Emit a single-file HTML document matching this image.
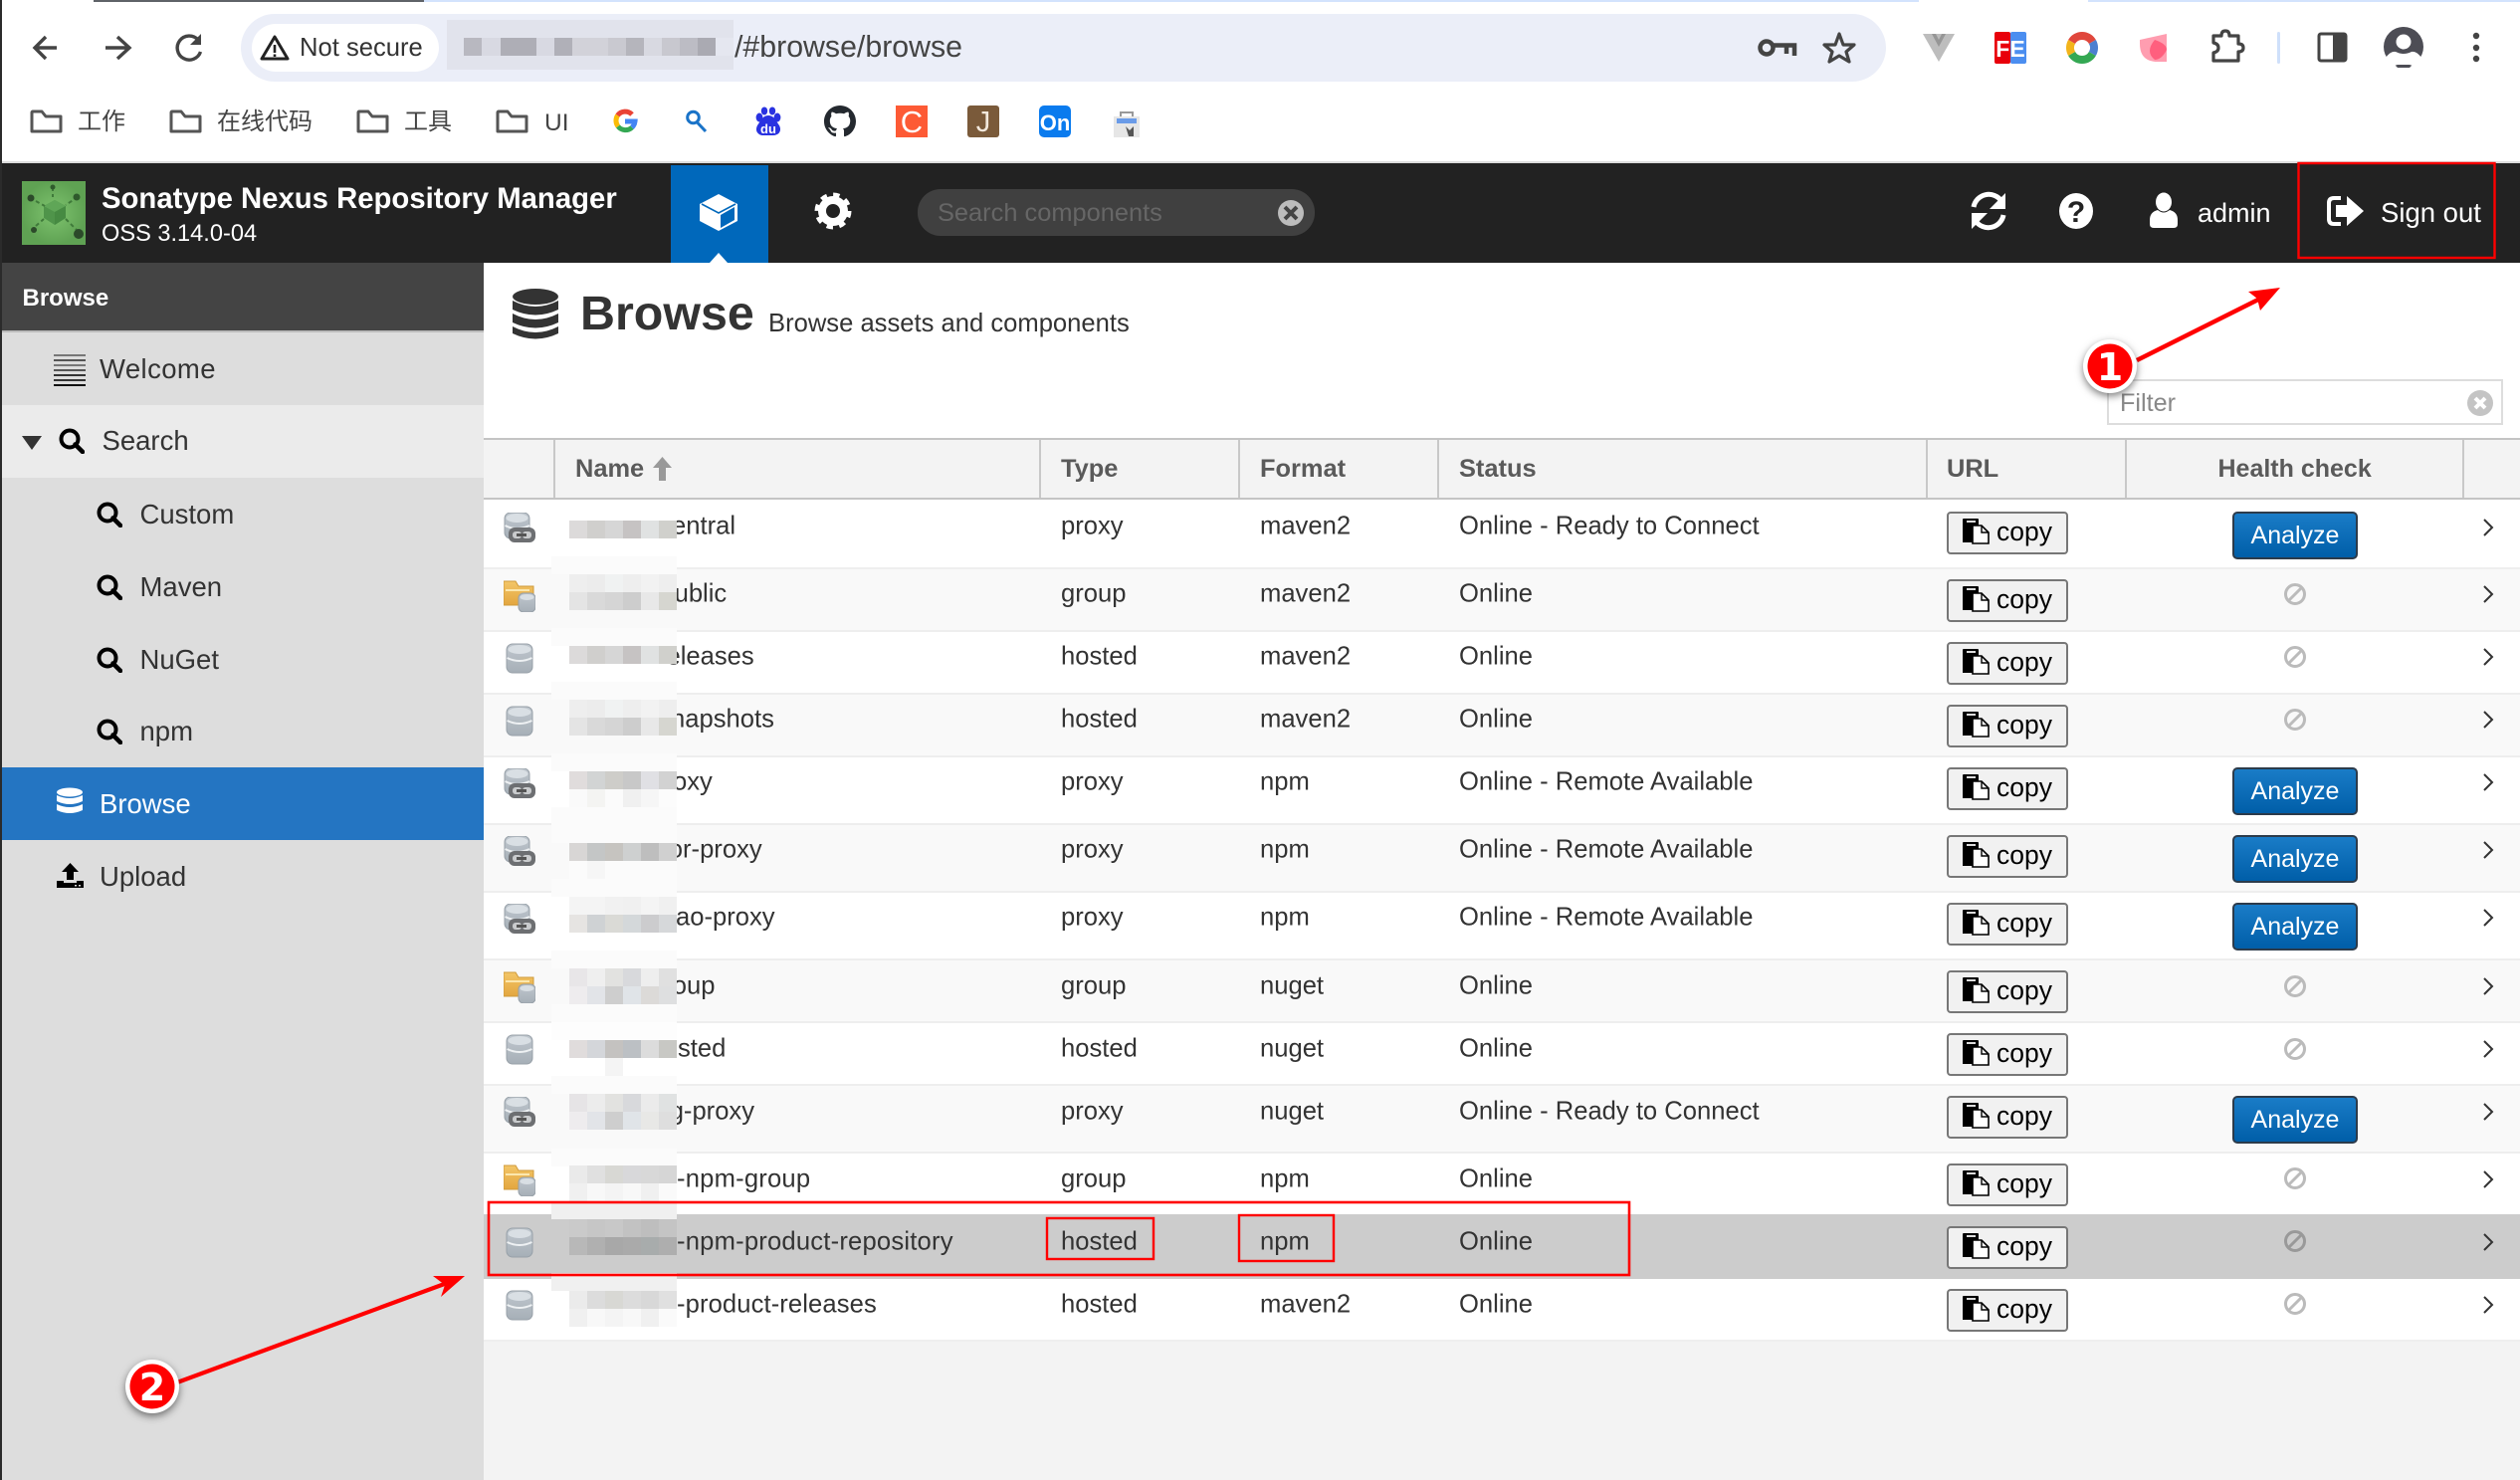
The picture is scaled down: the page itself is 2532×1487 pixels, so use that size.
<!DOCTYPE html>
<html><head><meta charset="utf-8"><title>Browse</title>
<style>
html,body{margin:0;padding:0;width:2532px;height:1487px;overflow:hidden;background:#fff}
body{position:relative;font-family:"Liberation Sans","Noto Sans CJK SC",sans-serif;color:#333}
div,span,i{position:absolute}
.t{line-height:1;white-space:nowrap}
.n{left:0;font-size:27.5px;line-height:1;white-space:nowrap}
.bg{left:486px;width:2046px}
.ln{left:486px;width:2046px;height:2px;background:#eee}
.alt{background:#f9f9f9}
.r{left:0;top:0;font-size:25.6px;line-height:1;white-space:nowrap;transform:translateY(1.5px)}
.r span{white-space:nowrap}
.hd{font-size:25.4px;font-weight:bold;color:#5a5a5a;top:459px;line-height:1;white-space:nowrap}
.vs{top:442px;width:2px;height:58px;background:#c8c8c8}
.c{left:1956px;width:118px;height:39px;border:2px solid #777;border-radius:4px;background:#f1f1f1;color:#000;font-size:26.5px;line-height:1}
.c b{position:absolute;font-weight:normal;left:48px;top:5px}
.c svg{position:absolute;left:14px;top:5px}
.a{left:2243px;width:122px;height:44px;border:2px solid #2c3b4b;border-radius:5px;background:linear-gradient(#1a7cc7,#005ea8);color:#fff;font-size:25px;line-height:1;text-align:center}
.a b{position:absolute;font-weight:normal;left:0;right:0;top:10px}
.s{left:572px;width:108px;height:18px}
.h{left:554px;width:126px;height:18px;background:#fbfbfb}
</style></head><body>
<svg width="0" height="0" style="position:absolute"><defs>
<linearGradient id="g1" x1="0" y1="0" x2="0" y2="1"><stop offset="0" stop-color="#c0c7ce"/><stop offset="1" stop-color="#a6afb7"/></linearGradient>
<linearGradient id="g2" x1="0" y1="0" x2="0" y2="1"><stop offset="0" stop-color="#f3c668"/><stop offset="1" stop-color="#e3a63f"/></linearGradient>
<radialGradient id="g3"><stop offset="0" stop-color="#7fc46f"/><stop offset="1" stop-color="#5fa253"/></radialGradient>
<symbol id="db" viewBox="0 0 28 31"><rect x="1" y="1" width="26" height="29" rx="6" fill="url(#g1)" stroke="#98a1a9"/><ellipse cx="14" cy="6.5" rx="11.5" ry="4.5" fill="#d9dfe4"/><path d="M1.5 15Q14 21 26.5 15" stroke="#eef1f3" stroke-width="2" fill="none"/></symbol>
<symbol id="px" viewBox="0 0 32 31"><rect x="1" y="0" width="25" height="26" rx="6" fill="url(#g1)" stroke="#98a1a9"/><ellipse cx="13.5" cy="5.5" rx="11" ry="4.5" fill="#d9dfe4"/><path d="M1.5 13Q13 19 26 13" stroke="#eef1f3" stroke-width="2" fill="none"/><rect x="5" y="15" width="27" height="15" rx="6" fill="#6d6f72"/><rect x="9" y="19" width="9" height="7" rx="3" fill="#c9cbcd"/><rect x="19" y="19" width="9" height="7" rx="3" fill="#c9cbcd"/><rect x="13" y="21" width="10" height="3" fill="#555"/></symbol>
<symbol id="fo" viewBox="0 0 32 32"><path d="M0 1H12L15 6H30V25H0Z" fill="url(#g2)" stroke="#cf9a3b"/><path d="M2 9H26V11H2Z" fill="#fbe7ae"/><rect x="15" y="13" width="17" height="19" rx="5" fill="url(#g1)" stroke="#98a1a9"/><ellipse cx="23.5" cy="17" rx="7" ry="3" fill="#d9dfe4"/></symbol>
<symbol id="cp" viewBox="0 0 27 26"><path d="M0 1a1 1 0 0 1 1-1H15a1 1 0 0 1 1 1V24H0Z" fill="#000"/><rect x="4" y="2" width="9" height="2" fill="#ddd"/><path d="M10 7H19L26 14V25H10Z" fill="#fff" stroke="#000" stroke-width="1.6"/><path d="M19 7V14H26" fill="none" stroke="#000" stroke-width="1.4"/></symbol>
<symbol id="mg" viewBox="0 0 26 26"><circle cx="11" cy="11" r="8.5" fill="none" stroke="#000" stroke-width="4"/><path d="M16.5 16.5L24 24" stroke="#000" stroke-width="4.5" stroke-linecap="round"/></symbol>
<symbol id="bf" viewBox="0 0 33 24"><path d="M2 22V3a1 1 0 0 1 1-1h9l4 5h15v15z" fill="none" stroke="#555" stroke-width="3" stroke-linejoin="round"/></symbol>
<symbol id="ban" viewBox="0 0 24 24"><circle cx="12" cy="12" r="9.5" fill="none" stroke="#bbb" stroke-width="3"/><path d="M5.5 18.5L18.5 5.5" stroke="#bbb" stroke-width="3"/></symbol>
<symbol id="ban2" viewBox="0 0 24 24"><circle cx="12" cy="12" r="9.5" fill="none" stroke="#999" stroke-width="3"/><path d="M5.5 18.5L18.5 5.5" stroke="#999" stroke-width="3"/></symbol>
<symbol id="ch" viewBox="0 0 12 18"><path d="M2 1L10 9L2 17" fill="none" stroke="#333" stroke-width="2"/></symbol>
</defs></svg>

<!-- browser chrome -->
<div style="left:94px;top:0;width:332px;height:2px;background:#5f6368"></div>
<div style="left:426px;top:0;width:1502px;height:2px;background:#d3e3fd"></div>
<div style="left:2098px;top:0;width:434px;height:2px;background:#d3e3fd"></div>
<div style="left:242px;top:14px;width:1653px;height:68px;border-radius:34px;background:#ebeef8"></div>
<div style="left:253px;top:24px;width:188px;height:48px;border-radius:24px;background:#fff"></div>
<div class="t" style="left:301px;top:36.3px;font-size:25.6px;color:#333">Not secure</div>
<div style="left:449px;top:20px;width:288px;height:50px;background:#e1e3ec"></div>
<div style="left:449px;top:38px;width:288px;height:18px;background:linear-gradient(90deg,#e1e3ec 17px,#b8b8c0 0 35px,#d8d9e2 0 54px,#aeaeb6 0 90px,#d8d9e2 0 108px,#b0b0b8 0 126px,#d2d2d9 0 162px,#c9c9d0 0 180px,#b5b5bc 0 198px,#d8d9e1 0 216px,#c8c8cf 0 234px,#bcbcc4 0 252px,#aaaab2 0 270px,#e5e7f0 0)"></div>
<div class="t" style="left:738px;top:33px;font-size:30.3px;color:#444">/#browse/browse</div>
<div class="t" style="left:78px;top:111px;font-size:24px;color:#444">工作</div>
<div class="t" style="left:218px;top:111px;font-size:24px;color:#444">在线代码</div>
<div class="t" style="left:406px;top:111px;font-size:24px;color:#444">工具</div>
<div class="t" style="left:547px;top:111.5px;font-size:24.5px;color:#444">UI</div>
<div style="left:0;top:162px;width:2532px;height:2px;background:#ddd"></div>

<!-- app header -->
<div style="left:0;top:164px;width:2532px;height:100px;background:#222"></div>
<div style="left:674px;top:166px;width:98px;height:98px;background:#0068bb"></div>
<div style="left:922px;top:190px;width:399px;height:47px;border-radius:23px;background:#404040"></div>
<div class="t" style="left:942px;top:202px;font-size:25.4px;color:#666">Search components</div>
<div class="t" style="left:102px;top:184.8px;font-size:29.3px;font-weight:bold;color:#fff">Sonatype Nexus Repository Manager</div>
<div class="t" style="left:102px;top:224.2px;font-size:23.6px;color:#fff">OSS 3.14.0-04</div>
<div class="t" style="left:2208px;top:200.5px;font-size:27px;color:#fff">admin</div>
<div class="t" style="left:2392px;top:200px;font-size:27.5px;color:#fff">Sign out</div>

<!-- sidebar -->
<div style="left:2px;top:264px;width:484px;height:68px;background:#444"></div>
<div style="left:2px;top:332px;width:484px;height:1155px;background:#ddd;border-top:2px solid #bbb;box-sizing:border-box"></div>
<div style="left:2px;top:407px;width:484px;height:73px;background:#ebebeb"></div>
<div style="left:2px;top:771px;width:484px;height:73px;background:#2475c2"></div>
<div class="t" style="left:22.5px;top:288px;font-size:24px;font-weight:bold;color:#fff">Browse</div>
<div class="n" style="left:100px;top:356.7px;letter-spacing:.4px">Welcome</div>
<div class="n" style="left:102.5px;top:428.7px">Search</div>
<div class="n" style="left:140.5px;top:503.2px">Custom</div>
<div class="n" style="left:140.5px;top:576.2px">Maven</div>
<div class="n" style="left:140.5px;top:649px">NuGet</div>
<div class="n" style="left:140.5px;top:721px">npm</div>
<div class="n" style="left:100px;top:794px;color:#fff">Browse</div>
<div class="n" style="left:100px;top:866.5px">Upload</div>

<!-- main -->
<div style="left:486px;top:1346px;width:2046px;height:141px;background:#f3f3f3"></div>
<div class="t" style="left:583px;top:291px;font-size:48.4px;font-weight:bold;color:#333">Browse</div>
<div class="t" style="left:772px;top:312.5px;font-size:25.6px;color:#333">Browse assets and components</div>
<div style="left:2117px;top:381px;width:394px;height:42px;border:2px solid #ddd;background:#fff"></div>
<div class="t" style="left:2130px;top:392.8px;font-size:25.2px;color:#888">Filter</div>

<!-- table header -->
<div style="left:486px;top:440px;width:2046px;height:62px;background:#f3f3f3;border-top:2px solid #c4c4c4;border-bottom:2px solid #c4c4c4;box-sizing:border-box"></div>
<div class="vs" style="left:556px"></div><div class="vs" style="left:1044px"></div><div class="vs" style="left:1244px"></div><div class="vs" style="left:1444px"></div><div class="vs" style="left:1935px"></div><div class="vs" style="left:2135px"></div><div class="vs" style="left:2474px"></div>
<div class="hd" style="left:578px">Name</div>
<div class="hd" style="left:1066px">Type</div>
<div class="hd" style="left:1266px">Format</div>
<div class="hd" style="left:1466px">Status</div>
<div class="hd" style="left:1956px">URL</div>
<div class="hd" style="left:2228.5px;font-size:25px">Health check</div>

<!-- row backgrounds -->
<div class="bg alt" style="top:572px;height:61px"></div>
<div class="bg alt" style="top:698px;height:61px"></div>
<div class="bg alt" style="top:829px;height:66px"></div>
<div class="bg alt" style="top:965px;height:61px"></div>
<div class="bg alt" style="top:1091px;height:66px"></div>
<div class="bg" style="top:1220px;height:65px;background:#ccc"></div>
<div class="ln" style="top:570px"></div><div class="ln" style="top:633px"></div><div class="ln" style="top:696px"></div><div class="ln" style="top:759px"></div><div class="ln" style="top:827px"></div><div class="ln" style="top:895px"></div><div class="ln" style="top:963px"></div><div class="ln" style="top:1026px"></div><div class="ln" style="top:1089px"></div><div class="ln" style="top:1157px"></div><div class="ln" style="top:1346px"></div>

<!-- rows text -->
<div class="r" style="top:515.4px"><span style="left:675px">entral</span><span style="left:1066px">proxy</span><span style="left:1266px">maven2</span><span style="left:1466px">Online - Ready to Connect</span></div>
<div class="r" style="top:582.6px"><span style="left:677.6px">ublic</span><span style="left:1066px">group</span><span style="left:1266px">maven2</span><span style="left:1466px">Online</span></div>
<div class="r" style="top:646px"><span style="left:669.5px">eleases</span><span style="left:1066px">hosted</span><span style="left:1266px">maven2</span><span style="left:1466px">Online</span></div>
<div class="r" style="top:709px"><span style="left:674px">napshots</span><span style="left:1066px">hosted</span><span style="left:1266px">maven2</span><span style="left:1466px">Online</span></div>
<div class="r" style="top:772px"><span style="left:676px">oxy</span><span style="left:1066px">proxy</span><span style="left:1266px">npm</span><span style="left:1466px">Online - Remote Available</span></div>
<div class="r" style="top:840px"><span style="left:671.8px">or-proxy</span><span style="left:1066px">proxy</span><span style="left:1266px">npm</span><span style="left:1466px">Online - Remote Available</span></div>
<div class="r" style="top:908px"><span style="left:679px">ao-proxy</span><span style="left:1066px">proxy</span><span style="left:1266px">npm</span><span style="left:1466px">Online - Remote Available</span></div>
<div class="r" style="top:976.5px"><span style="left:675.8px">oup</span><span style="left:1066px">group</span><span style="left:1266px">nuget</span><span style="left:1466px">Online</span></div>
<div class="r" style="top:1039.5px"><span style="left:681px">sted</span><span style="left:1066px">hosted</span><span style="left:1266px">nuget</span><span style="left:1466px">Online</span></div>
<div class="r" style="top:1102.5px"><span style="left:672.7px">g-proxy</span><span style="left:1066px">proxy</span><span style="left:1266px">nuget</span><span style="left:1466px">Online - Ready to Connect</span></div>
<div class="r" style="top:1171px"><span style="left:680px;letter-spacing:.2px">-npm-group</span><span style="left:1066px">group</span><span style="left:1266px">npm</span><span style="left:1466px">Online</span></div>
<div class="r" style="top:1234px"><span style="left:680px;letter-spacing:.2px">-npm-product-repository</span><span style="left:1066px">hosted</span><span style="left:1266px">npm</span><span style="left:1466px">Online</span></div>
<div class="r" style="top:1297px"><span style="left:680px;letter-spacing:.1px">-product-releases</span><span style="left:1066px">hosted</span><span style="left:1266px">maven2</span><span style="left:1466px">Online</span></div>

<!-- copy buttons -->
<div class="c" style="top:514px"><svg width="27" height="26"><use href="#cp"/></svg><b>copy</b></div>
<div class="c" style="top:582px"><svg width="27" height="26"><use href="#cp"/></svg><b>copy</b></div>
<div class="c" style="top:645px"><svg width="27" height="26"><use href="#cp"/></svg><b>copy</b></div>
<div class="c" style="top:708px"><svg width="27" height="26"><use href="#cp"/></svg><b>copy</b></div>
<div class="c" style="top:771px"><svg width="27" height="26"><use href="#cp"/></svg><b>copy</b></div>
<div class="c" style="top:839px"><svg width="27" height="26"><use href="#cp"/></svg><b>copy</b></div>
<div class="c" style="top:907px"><svg width="27" height="26"><use href="#cp"/></svg><b>copy</b></div>
<div class="c" style="top:975px"><svg width="27" height="26"><use href="#cp"/></svg><b>copy</b></div>
<div class="c" style="top:1038px"><svg width="27" height="26"><use href="#cp"/></svg><b>copy</b></div>
<div class="c" style="top:1101px"><svg width="27" height="26"><use href="#cp"/></svg><b>copy</b></div>
<div class="c" style="top:1169px"><svg width="27" height="26"><use href="#cp"/></svg><b>copy</b></div>
<div class="c" style="top:1232px"><svg width="27" height="26"><use href="#cp"/></svg><b>copy</b></div>
<div class="c" style="top:1295px"><svg width="27" height="26"><use href="#cp"/></svg><b>copy</b></div>
<div class="a" style="top:514px"><b>Analyze</b></div>
<div class="a" style="top:771px"><b>Analyze</b></div>
<div class="a" style="top:839px"><b>Analyze</b></div>
<div class="a" style="top:907px"><b>Analyze</b></div>
<div class="a" style="top:1101px"><b>Analyze</b></div>

<!-- mosaics -->
<div class="s" style="top:523px;background:linear-gradient(90deg,#dcdada 18px,#d0cfcd 0 36px,#d6d6d6 0 54px,#c6c3c3 0 72px,#e0e2e2 0 90px,#d0d0cc 0)"></div>
<div class="h" style="top:559px"></div>
<div class="s" style="top:577px;background:linear-gradient(90deg,#eee 18px,#ececec 0 36px,#f0f2f2 0 54px,#eee 0 72px,#f2f2f2 0 90px,#eee 0)"></div>
<div class="s" style="top:595px;background:linear-gradient(90deg,#e4e4e4 18px,#d9d9d9 0 36px,#d5d5d5 0 54px,#cdcdcd 0 72px,#e8e8e8 0 90px,#d6d6d0 0)"></div>
<div class="h" style="top:631px"></div>
<div class="s" style="top:649px;background:linear-gradient(90deg,#dcdada 18px,#d0cfcd 0 36px,#d6d6d6 0 54px,#c6c3c3 0 72px,#e0e2e2 0 90px,#d0d0cc 0)"></div>
<div class="h" style="top:685px"></div>
<div class="s" style="top:703px;background:linear-gradient(90deg,#eee 18px,#ececec 0 36px,#f0f2f2 0 54px,#eee 0 72px,#f2f2f2 0 90px,#eee 0)"></div>
<div class="s" style="top:721px;background:linear-gradient(90deg,#e4e4e4 18px,#d9d9d9 0 36px,#d5d5d5 0 54px,#cdcdcd 0 72px,#e8e8e8 0 90px,#d6d6d0 0)"></div>
<div class="h" style="top:757px"></div>
<div class="s" style="top:775px;background:linear-gradient(90deg,#e0dcdc 18px,#d2d4d4 0 36px,#cecdc9 0 54px,#c8c8c8 0 72px,#e0e0e4 0 90px,#d2d2d2 0)"></div>
<div class="s" style="top:793px;background:linear-gradient(90deg,#fafafa 18px,#f4f4f2 0 36px,#fbfbfb 0 54px,#f0f0f0 0 72px,#f6f6f6 0 90px,#fcfcfc 0)"></div>
<div class="h" style="top:811px"></div>
<div class="h" style="top:829px"></div>
<div class="s" style="top:847px;background:linear-gradient(90deg,#d8d6d5 18px,#c4c6c6 0 36px,#c6c4c0 0 54px,#ced0d0 0 72px,#bebebe 0 90px,#d0d0d0 0)"></div>
<div class="s" style="top:865px;background:linear-gradient(90deg,#fbfbfb 18px,#f6f6f6 0 36px,#fbfbfb 0)"></div>
<div class="h" style="top:883px"></div>
<div class="s" style="top:901px;background:linear-gradient(90deg,#f4f4f4 36px,#f1f1f1 0 54px,#f0f0f0 0 72px,#f4f4f4 0 90px,#f0f0f0 0)"></div>
<div class="s" style="top:919px;background:linear-gradient(90deg,#e6e4e2 18px,#cfd2d4 0 36px,#dadad6 0 54px,#d4d8da 0 72px,#ccccce 0 90px,#d6d8da 0)"></div>
<div class="h" style="top:955px"></div>
<div class="s" style="top:973px;background:linear-gradient(90deg,#e8e6e8 18px,#efefef 0 36px,#e2e2e0 0 54px,#d8d9dc 0 72px,#eee 0 90px,#e0e0e0 0)"></div>
<div class="s" style="top:991px;background:linear-gradient(90deg,#eeecee 18px,#e2e4e8 0 36px,#cecece 0 54px,#e0e4e8 0 72px,#dcdad8 0 90px,#dedfe0 0)"></div>
<div class="h" style="top:1009px"></div>
<div class="h" style="top:1027px;background:#fdfdfd"></div>
<div class="s" style="top:1045px;background:linear-gradient(90deg,#e0dcdc 18px,#d4d6da 0 36px,#c4c2c0 0 54px,#bcc0c4 0 72px,#dcdcdc 0 90px,#c8c8c4 0)"></div>
<div class="s" style="top:1063px;background:linear-gradient(90deg,#fff 36px,#f4f4f4 0 54px,#fff 0)"></div>
<div class="h" style="top:1081px"></div>
<div class="s" style="top:1099px;background:linear-gradient(90deg,#e6e4e6 18px,#ececec 0 36px,#e2e2e0 0 54px,#d8d9dc 0 72px,#ebebeb 0 90px,#e0e2e2 0)"></div>
<div class="s" style="top:1117px;background:linear-gradient(90deg,#eeecee 18px,#e2e4e8 0 36px,#cecece 0 54px,#e0e4e8 0 72px,#e8e8e6 0 90px,#dedede 0)"></div>
<div class="h" style="top:1154px"></div>
<div class="s" style="top:1171px;background:linear-gradient(90deg,#eaeaea 18px,#e0e0e0 0 36px,#d8d8d4 0 54px,#d8d8da 0 72px,#d8d8d8 0 90px,#d6d6d6 0)"></div>
<div class="s" style="top:1189px;background:linear-gradient(90deg,#f0f0f0 18px,#f8f8f8 0 36px,#f4f4f4 0 54px,#f8f8f8 0 72px,#f0f0f0 0 90px,#fafafa 0)"></div>
<div class="h" style="top:1207px;background:#f0f0f0"></div>
<div class="s" style="top:1225px;background:linear-gradient(90deg,#cacaca 18px,#c6c6c6 0 36px,#c8c8c8 0 54px,#c2c2c2 0 72px,#bebebe 0 90px,#c4c4c4 0)"></div>
<div class="s" style="top:1243px;background:linear-gradient(90deg,#b8b8b8 18px,#b0b0b0 0 36px,#a8a8a8 0 54px,#aaa 0 72px,#a8acac 0 90px,#aeaeae 0)"></div>
<div class="h" style="top:1279px;background:#f0f0f0"></div>
<div class="s" style="top:1297px;background:linear-gradient(90deg,#ebebeb 18px,#dcdcdc 0 36px,#d8d8d4 0 54px,#dcdcdc 0 72px,#d8d8d8 0 90px,#e0e0e0 0)"></div>
<div class="s" style="top:1315px;background:linear-gradient(90deg,#f0f0f0 18px,#f8f8f8 0 36px,#f4f4f4 0 54px,#f8f8f8 0 72px,#f0f0f0 0 90px,#fafafa 0)"></div>

<!-- left edge -->
<div style="left:0;top:0;width:2px;height:1487px;background:#2b2b2b"></div>

<!-- overlay icons and annotations -->
<svg width="2532" height="1487" viewBox="0 0 2532 1487" style="position:absolute;left:0;top:0">
<!-- nav -->
<g fill="none" stroke="#444" stroke-width="3.4">
<path d="M57 48H37M46 37L35 48L46 59"/><path d="M106 48H128M118 37L130 48L118 59"/>
<path d="M199 40A12 12 0 1 0 201.5 52"/>
</g>
<path d="M202 34V45H191Z" fill="#444"/>
<path d="M276 37L289 59H263Z" fill="none" stroke="#222" stroke-width="3" stroke-linejoin="round"/><path d="M276 45V53M276 54.5V57" stroke="#222" stroke-width="2.6"/>
<!-- key, star -->
<circle cx="1775" cy="48" r="6.5" fill="none" stroke="#444" stroke-width="4.5"/><path d="M1782 45.5H1803V56M1795 45.5V54" fill="none" stroke="#444" stroke-width="4.5"/>
<path d="M1848 34L1852 45L1863 45L1855 52L1858 62L1848 56L1838 62L1841 52L1833 45L1844 45Z" fill="none" stroke="#444" stroke-width="3.2" stroke-linejoin="round"/>
<!-- extensions -->
<path d="M1932 34h32l-16 28z" fill="#bdbdbd"/><path d="M1941 34l7 13 7-13h-4l-3 6-3-6z" fill="#969696"/>
<rect x="2004" y="32" width="16" height="32" rx="2" fill="#e8000b"/><rect x="2020" y="32" width="16" height="32" rx="2" fill="#4b8ef0"/>
<text x="2020" y="57" font-family="Liberation Sans" font-weight="bold" font-size="23" fill="#fff" text-anchor="middle">FE</text>
<g fill="none" stroke-width="8"><path d="M2081.6 42A12 12 0 0 1 2102.4 42" stroke="#e0473c"/><path d="M2102.4 42A12 12 0 0 1 2102.4 54" stroke="#4c7fd0"/><path d="M2102.4 54A12 12 0 0 1 2081.6 54" stroke="#34a853"/><path d="M2081.6 54A12 12 0 0 1 2081.6 42" stroke="#f3b41b"/></g>
<path d="M2150 40L2177 34V62H2168Q2150 62 2150 44Z" fill="#ff9db0"/><path d="M2165 40Q2177 44 2177 50Q2172 60 2165 60Q2155 52 2165 40Z" fill="#ff5f7e"/>
<path d="M2224 36H2232Q2232 31 2236 31Q2240 31 2240 36H2249V44Q2254 44 2254 48Q2254 52 2249 52V61H2224V53Q2229 52 2229 48Q2229 44 2224 43Z" fill="none" stroke="#444" stroke-width="3.2" stroke-linejoin="round"/>
<rect x="2288" y="32" width="3" height="32" rx="1.5" fill="#cfe0fa"/>
<rect x="2330" y="34" width="27" height="27" rx="2" fill="none" stroke="#444" stroke-width="3"/><rect x="2344" y="34" width="13" height="27" fill="#444"/>
<circle cx="2415" cy="47" r="20" fill="#4d4d55"/><circle cx="2415" cy="42" r="7.5" fill="#fff"/><path d="M2397 58Q2402 51 2407 52Q2415 56 2423 52Q2428 51 2433 58L2433 65H2397Z" fill="#fff"/><path d="M2407 66H2423L2421 68H2409Z" fill="#4d4d55"/>
<circle cx="2488" cy="36" r="3.2" fill="#444"/><circle cx="2488" cy="48" r="3.2" fill="#444"/><circle cx="2488" cy="59" r="3.2" fill="#444"/>
<!-- bookmarks -->
<use href="#bf" x="30" y="110" width="33" height="24"/><use href="#bf" x="170" y="110" width="33" height="24"/><use href="#bf" x="358" y="110" width="33" height="24"/><use href="#bf" x="498" y="110" width="33" height="24"/>
<g fill="none" stroke-width="5"><path d="M620.5 116A9.5 9.5 0 0 1 635 115" stroke="#ea4335"/><path d="M621 127A9.5 9.5 0 0 1 620.5 116" stroke="#fbbc05"/><path d="M635 128A9.5 9.5 0 0 1 621 127" stroke="#34a853"/><path d="M628 122H638A9.5 9.5 0 0 1 635 128" stroke="#4285f4"/></g>
<circle cx="696.5" cy="118" r="5.8" fill="none" stroke="#1a73c8" stroke-width="3"/><path d="M700.5 123L709 132" stroke="#1a73c8" stroke-width="3"/>
<g fill="#2932e1"><ellipse cx="763" cy="118" rx="3.4" ry="4.5"/><ellipse cx="768" cy="111.5" rx="3.2" ry="4"/><ellipse cx="776" cy="111.5" rx="3.2" ry="4"/><ellipse cx="781" cy="118" rx="3.4" ry="4.5"/><path d="M772 116C778 116 780 122 783 126C786 132 782 136 777 136H767C762 136 758 132 761 126C764 122 766 116 772 116Z"/></g>
<text x="772" y="134" font-family="Liberation Sans" font-size="13" font-weight="bold" fill="#fff" text-anchor="middle">du</text>
<svg x="828" y="106" width="32" height="32" viewBox="0 0 16 16"><path fill="#24292f" d="M8 0C3.58 0 0 3.58 0 8c0 3.54 2.29 6.53 5.47 7.59.4.07.55-.17.55-.38 0-.19-.01-.82-.01-1.49-2.01.37-2.53-.49-2.69-.94-.09-.23-.48-.94-.82-1.13-.28-.15-.68-.52-.01-.53.63-.01 1.08.58 1.23.82.72 1.21 1.87.87 2.33.66.07-.52.28-.87.51-1.07-1.78-.2-3.64-.89-3.64-3.95 0-.87.31-1.59.82-2.15-.08-.2-.36-1.02.08-2.12 0 0 .67-.21 2.2.82.64-.18 1.32-.27 2-.27.68 0 1.36.09 2 .27 1.53-1.04 2.2-.82 2.2-.82.44 1.1.16 1.92.08 2.12.51.56.82 1.27.82 2.15 0 3.07-1.87 3.75-3.65 3.95.29.25.54.73.54 1.48 0 1.07-.01 1.93-.01 2.2 0 .21.15.46.55.38A8.013 8.013 0 0016 8c0-4.42-3.58-8-8-8z"/></svg>
<rect x="900" y="106" width="32" height="32" fill="#fd5a35"/><text x="916" y="133" font-family="Liberation Sans" font-size="31" fill="#fff" text-anchor="middle">C</text>
<rect x="972" y="106" width="32" height="32" rx="3" fill="#7a5a3a"/><text x="988" y="132" font-family="Liberation Sans" font-size="29" fill="#f2e8dc" text-anchor="middle">J</text>
<rect x="1044" y="106" width="32" height="32" rx="5" fill="#0a7bee"/><text x="1060" y="131" font-family="Liberation Sans" font-size="22" font-weight="bold" fill="#fff" text-anchor="middle">On</text>
<rect x="1119" y="117" width="26" height="21" fill="#e6e6e6"/><rect x="1122" y="119" width="20" height="5" fill="#6a9be8"/><path d="M1126 117V113H1138V117" fill="none" stroke="#999" stroke-width="2"/><path d="M1131 127L1135 131L1139 127V137H1134Z" fill="#555"/>
<!-- logo -->
<rect x="22" y="182" width="64" height="64" fill="url(#g3)"/>
<path d="M55 201L66 207V219L55 226L44 219V207Z" fill="#4f944a"/><path d="M55 201L66 207L55 213L44 207Z" fill="#5fa657"/><path d="M55 213L66 207V219L55 226Z" fill="#468a42"/>
<g stroke="#3f7a3a" stroke-width="2" stroke-dasharray="4 3"><path d="M53 188V198M36 202L45 207M78 198L66 206M36 227L44 220M66 220L78 232"/></g>
<circle cx="53" cy="188" r="2.5" fill="#2f5a2c"/><circle cx="31" cy="199" r="3.5" fill="#2c4a2a"/><circle cx="77" cy="198" r="3.5" fill="#2f5a2c"/><circle cx="34" cy="231" r="3" fill="#2c4a2a"/><circle cx="79" cy="235" r="5" fill="#2c4a2a"/>
<!-- header icons -->
<path d="M722 195L741 205V222L722 232L703 222V205Z" fill="#fff"/><path d="M724 216L738 208V221L724 229Z" fill="#0068bb"/><path d="M705 205L722 214L739 205" fill="none" stroke="#0068bb" stroke-width="1.6"/>
<path d="M722 254L731 264H713Z" fill="#fff"/>
<circle cx="837" cy="212" r="11" fill="none" stroke="#fff" stroke-width="8"/><circle cx="837" cy="212" r="16" fill="none" stroke="#fff" stroke-width="5" stroke-dasharray="6.3 6.27"/>
<circle cx="1297" cy="214" r="13" fill="#bcbcbc"/><path d="M1291 208L1303 220M1303 208L1291 220" stroke="#444" stroke-width="4"/>
<path d="M1983 208A15.5 15.5 0 0 1 2011 202" fill="none" stroke="#fff" stroke-width="5"/><path d="M2015 194V210H1999Z" fill="#fff"/>
<path d="M2013 216A15.5 15.5 0 0 1 1985 222" fill="none" stroke="#fff" stroke-width="5"/><path d="M1981 230V214H1997Z" fill="#fff"/>
<ellipse cx="2086" cy="212" rx="17" ry="18" fill="#fff"/><text x="2086" y="223" font-family="Liberation Sans" font-weight="bold" font-size="30" fill="#222" text-anchor="middle">?</text>
<ellipse cx="2174" cy="203" rx="8" ry="9.5" fill="#fff"/><path d="M2160 225V221Q2160 213 2168 211Q2174 216 2180 211Q2188 213 2188 221V225Q2188 229 2184 229H2164Q2160 229 2160 225Z" fill="#fff"/>
<path d="M2352 199H2345Q2340 199 2340 204V220Q2340 225 2345 225H2352" fill="none" stroke="#fff" stroke-width="4"/><path d="M2347 206H2358V197L2375 212L2358 227V218H2347Z" fill="#fff"/>
<!-- sidebar icons -->
<g fill="#333"><rect x="54" y="356" width="32" height="2" fill="#777"/><rect x="54" y="361" width="32" height="2" fill="#555"/><rect x="54" y="366" width="32" height="2" fill="#777"/><rect x="54" y="371" width="32" height="2" fill="#555"/><rect x="54" y="376" width="32" height="2"/><rect x="54" y="381" width="32" height="2"/><rect x="54" y="386" width="32" height="2" fill="#111"/></g>
<path d="M22 438H42L32 452Z" fill="#333"/>
<use href="#mg" x="59" y="430" width="26" height="26"/><use href="#mg" x="97" y="504" width="26" height="26"/><use href="#mg" x="97" y="577" width="26" height="26"/><use href="#mg" x="97" y="650" width="26" height="26"/><use href="#mg" x="97" y="722" width="26" height="26"/>
<g fill="#fff"><ellipse cx="70" cy="796" rx="13" ry="4.5"/><path d="M57 799Q70 805 83 799V805Q70 811 57 805ZM57 808Q70 814 83 808V814Q70 820 57 814Z"/></g>
<path d="M70.5 867L79 876H74V884H67V876H62Z" fill="#000"/><path d="M57 885H64V887H77V885H84V892H57Z" fill="#000"/><rect x="75" y="889" width="2" height="1.5" fill="#ddd"/><rect x="79" y="889" width="2" height="1.5" fill="#ddd"/>
<!-- page db icon -->
<g fill="#333"><ellipse cx="538" cy="298" rx="23" ry="8"/><path d="M515 302Q538 314 561 302V311Q538 322 515 311ZM515 315Q538 327 561 315V324Q538 335 515 324ZM515 328Q538 340 561 328V335Q538 346 515 335Z"/></g>
<!-- sort arrow -->
<path d="M665.5 459L675 470H669V483H662V470H656Z" fill="#999"/>
<!-- filter clear -->
<circle cx="2492" cy="405" r="13" fill="#c4c4c4"/><path d="M2487 400L2497 410M2497 400L2487 410" stroke="#fff" stroke-width="4"/>
<!-- row icons -->
<use href="#px" x="506" y="515" width="32" height="31"/>
<use href="#fo" x="506" y="583" width="32" height="32"/>
<use href="#db" x="508" y="646" width="28" height="31"/>
<use href="#db" x="508" y="709" width="28" height="31"/>
<use href="#px" x="506" y="772" width="32" height="31"/>
<use href="#px" x="506" y="840" width="32" height="31"/>
<use href="#px" x="506" y="908" width="32" height="31"/>
<use href="#fo" x="506" y="976" width="32" height="32"/>
<use href="#db" x="508" y="1039" width="28" height="31"/>
<use href="#px" x="506" y="1102" width="32" height="31"/>
<use href="#fo" x="506" y="1170" width="32" height="32"/>
<use href="#db" x="508" y="1233" width="28" height="31"/>
<use href="#db" x="508" y="1296" width="28" height="31"/>
<!-- ban icons -->
<use href="#ban" x="2294" y="585" width="24" height="24"/><use href="#ban" x="2294" y="648" width="24" height="24"/><use href="#ban" x="2294" y="711" width="24" height="24"/><use href="#ban" x="2294" y="979" width="24" height="24"/><use href="#ban" x="2294" y="1042" width="24" height="24"/><use href="#ban" x="2294" y="1172" width="24" height="24"/><use href="#ban2" x="2294" y="1235" width="24" height="24"/><use href="#ban" x="2294" y="1298" width="24" height="24"/>
<!-- chevrons -->
<use href="#ch" x="2494" y="521" width="12" height="18"/><use href="#ch" x="2494" y="588" width="12" height="18"/><use href="#ch" x="2494" y="651" width="12" height="18"/><use href="#ch" x="2494" y="714" width="12" height="18"/><use href="#ch" x="2494" y="777" width="12" height="18"/><use href="#ch" x="2494" y="845" width="12" height="18"/><use href="#ch" x="2494" y="913" width="12" height="18"/><use href="#ch" x="2494" y="982" width="12" height="18"/><use href="#ch" x="2494" y="1045" width="12" height="18"/><use href="#ch" x="2494" y="1108" width="12" height="18"/><use href="#ch" x="2494" y="1176" width="12" height="18"/><use href="#ch" x="2494" y="1239" width="12" height="18"/><use href="#ch" x="2494" y="1302" width="12" height="18"/>
<!-- red annotations -->
<g fill="none" stroke="#f00"><rect x="2309.5" y="164" width="197" height="95" stroke-width="2.4"/><rect x="491" y="1208" width="1146" height="73" stroke-width="2.6"/><rect x="1052" y="1224" width="107" height="41" stroke-width="2.4"/><rect x="1245" y="1221" width="95" height="46" stroke-width="2.4"/></g>
<path d="M2147 362L2275 298" stroke="#f00" stroke-width="4.4"/><path d="M2291 289L2259 293L2268 300L2271 312Z" fill="#f00"/>
<path d="M178 1389L452 1288" stroke="#f00" stroke-width="4.2"/><path d="M467 1282H435L447 1291L443 1303Z" fill="#f00"/>
<g style="filter:drop-shadow(0 3px 4px rgba(0,0,0,.5))"><circle cx="2120" cy="368" r="27" fill="#fff"/><circle cx="153" cy="1393" r="27" fill="#fff"/></g>
<circle cx="2120" cy="368" r="22.5" fill="#f00"/><circle cx="153" cy="1393" r="22.5" fill="#f00"/>
<text x="2120" y="382" font-family="DejaVu Sans" font-weight="bold" font-size="38" fill="#fff" text-anchor="middle">1</text>
<text x="153" y="1407" font-family="DejaVu Sans" font-weight="bold" font-size="38" fill="#fff" text-anchor="middle">2</text>
</svg>
</body></html>
